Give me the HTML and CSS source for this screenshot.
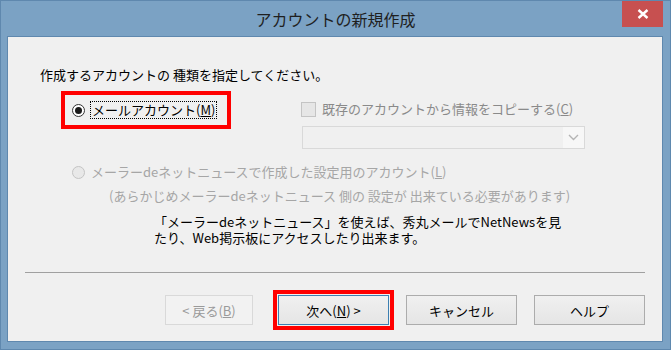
FILE: index.html
```html
<!DOCTYPE html>
<html lang="ja">
<head>
  <meta charset="UTF-8" />
  <title>アカウントの新規作成</title>
  <link rel="stylesheet" href="styles.css">
</head>
<body>
  <div class="window">
    <div class="titlebar">
      <span></span>
      <h1 class="title">アカウントの新規作成</h1>
      <button class="close" title="閉じる">
        <svg width="12" height="10" viewBox="0 0 12 10">
          <path d="M1.5 1 L10.5 9 M10.5 1 L1.5 9" stroke="#fff" stroke-width="2.4" fill="none" />
        </svg>
      </button>
    </div>

    <div class="client">
      <p class="prompt">作成するアカウントの 種類を指定してください。</p>

      <div class="options">
        <div class="mark-box">
          <label class="radio">
            <span class="radio-dot checked"></span>
            <span class="focus">メールアカウント(<u>M</u>)</span>
          </label>
        </div>
        <div class="copy">
          <label class="check">
            <span class="check-box"></span>
            <span>既存のアカウントから情報をコピーする(<u>C</u>)</span>
          </label>
          <div class="combo">
            <span class="combo-arrow">
              <svg width="11" height="7" viewBox="0 0 11 7">
                <path d="M1 1 L5.5 5.5 L10 1" stroke="#b4b4b4" stroke-width="1.4" fill="none" />
              </svg>
            </span>
          </div>
        </div>
      </div>

      <label class="radio disabled second">
        <span class="radio-dot"></span>
        <span>メーラーdeネットニュースで作成した設定用のアカウント(<u>L</u>)</span>
      </label>
      <p class="note">(あらかじめメーラーdeネットニュース 側の 設定が 出来ている必要があります)</p>

      <p class="info">「メーラーdeネットニュース」を使えば、秀丸メールでNetNewsを見<br>たり、Web掲示板にアクセスしたり出来ます。</p>

      <div class="rule"></div>

      <div class="buttons">
        <button class="btn back" disabled>&lt; 戻る(<u>B</u>)</button>
        <div class="mark-btn">
          <button class="btn default">次へ(<u>N</u>) &gt;</button>
        </div>
        <button class="btn cancel">キャンセル</button>
        <button class="btn help">ヘルプ</button>
      </div>
    </div>
  </div>
</body>
</html>
```

FILE: styles.css
```css
body {
  margin: 0;
  font-family: "Noto Sans CJK JP", "Liberation Sans", sans-serif;
  font-size: 13px;
  color: #000;
}
.window {
  width: 671px;
  height: 350px;
  box-sizing: border-box;
  background: #7ba2c4;
  border: 1px solid #5f88ae;
  display: flex;
  flex-direction: column;
}
.titlebar {
  height: 35px;
  display: grid;
  grid-template-columns: 1fr auto 1fr;
  align-items: start;
}
.title {
  margin: 0;
  padding-top: 6px;
  font-size: 16px;
  font-weight: normal;
  line-height: 24px;
  color: #1f1f1f;
}
.close {
  justify-self: end;
  width: 41px;
  height: 26px;
  margin: 0 7px 0 0;
  padding: 0;
  border: none;
  background: #c75050;
  display: flex;
  align-items: center;
  justify-content: center;
}
.client {
  width: 654px;
  height: 304px;
  margin: 0 0 0 6px;
  background: #f0f0f0;
  border: 1px solid #5f88ae;
}
.prompt {
  margin: 30px 0 0 32px;
  line-height: 16px;
}
.options {
  display: flex;
  margin-top: 8px;
  height: 58px;
}
.mark-box {
  margin-left: 53px;
  width: 155px;
  height: 30px;
  border: 4px solid #f00;
  display: flex;
  align-items: center;
  padding-left: 7px;
}
.radio {
  display: flex;
  align-items: center;
  line-height: 16px;
}
.radio-dot {
  width: 11px;
  height: 11px;
  border: 1px solid #333;
  border-radius: 50%;
  background: #fff;
  display: flex;
  align-items: center;
  justify-content: center;
  margin-right: 5px;
}
.radio-dot.checked::after {
  content: "";
  width: 7px;
  height: 7px;
  border-radius: 50%;
  background: #1a1a1a;
}
.focus {
  border: 1px dotted #000;
  padding: 0 1px;
}
.copy {
  margin-left: 70px;
}
.check {
  display: flex;
  align-items: center;
  margin-top: 10px;
  line-height: 16px;
  color: #8a8a8a;
}
.check-box {
  width: 13px;
  height: 13px;
  border: 1px solid #c4c4c4;
  background: #e6e6e6;
  margin-right: 6px;
}
.combo {
  margin: 9px 0 0 1px;
  width: 281px;
  height: 21px;
  border: 1px solid #d9d9d9;
  background: #f0f0f0;
  display: flex;
  justify-content: flex-end;
}
.combo-arrow {
  width: 21px;
  background: #f7f7f7;
  display: flex;
  align-items: center;
  justify-content: center;
}
.second {
  margin: 15px 0 0 64px;
  color: #a6a6a6;
}
.second .radio-dot {
  border-color: #c4c4c4;
  background: #e8e8e8;
  margin-right: 6px;
}
.note {
  margin: 8px 0 0 101px;
  line-height: 16px;
  color: #a6a6a6;
}
.info {
  margin: 10px 0 0 146px;
  line-height: 16px;
}
.rule {
  margin: 26px 0 0 17px;
  width: 620px;
  height: 1px;
  background: #a0a0a0;
}
.buttons {
  display: flex;
  align-items: center;
  margin-top: 17px;
  padding-left: 157px;
}
.btn {
  height: 30px;
  width: 111px;
  padding: 0;
  font-family: inherit;
  font-size: 13px;
  color: #000;
  background: linear-gradient(#f0f0f0, #e5e5e5);
  border: 1px solid #acacac;
}
.btn.back {
  width: 88px;
  color: #9a9a9a;
  background: #f2f2f2;
  border-color: #d9d9d9;
}
.btn.default {
  border-color: #3c7fb1;
}
.mark-btn {
  margin-left: 20px;
  border: 4px solid #f00;
  padding: 1px;
  display: flex;
}
.cancel {
  margin-left: 12px;
}
.help {
  margin-left: 17px;
}
```
